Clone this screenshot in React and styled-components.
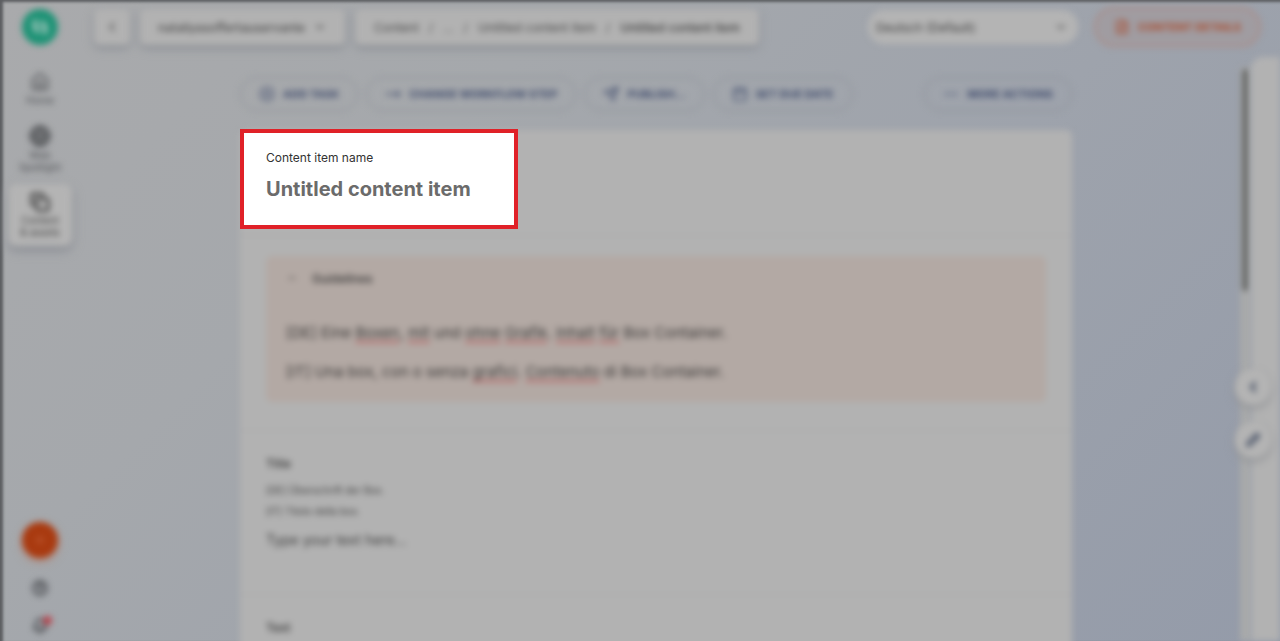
import React from "react";
import styled, { createGlobalStyle, css } from "styled-components";
import {
  Calendar,
  ChevronDown,
  ChevronLeft,
  ChevronUp,
  CircleHelp,
  CirclePlus,
  Globe,
  FileText,
  House,
  Bell,
  Copy,
  MoveRight,
  Ellipsis,
  Pencil,
  Plus,
  Send,
} from "lucide-react";

const GlobalStyle = createGlobalStyle`
  * {
    box-sizing: border-box;
  }

  body {
    margin: 0;
    font-family: Inter, "Liberation Sans", sans-serif;
    font-size: 12px;
    color: #4c4c4c;
  }

  button, input, select {
    font: inherit;
    color: inherit;
  }
`;

const outOfFocus = css`
  filter: blur(3px);
`;

const Page = styled.div`
  display: flex;
  height: 100vh;
  overflow: hidden;
  background: linear-gradient(135deg, #a9aaac 0%, #a5a8ac 30%, #9ea3ac 60%, #949ba9 100%);
  box-shadow: inset 3px 2px 3px #5c5e61;
`;

const Sidebar = styled.nav`
  ${outOfFocus}
  display: flex;
  flex-direction: column;
  align-items: center;
  width: 80px;
  padding-top: 8px;
`;

const Logo = styled.a`
  display: flex;
  width: 38px;
  height: 38px;
  margin-bottom: 18px;
`;

const NavItem = styled.a`
  display: flex;
  flex-direction: column;
  align-items: center;
  gap: 2px;
  width: 64px;
  margin-bottom: 3px;
  padding: 8px 4px;
  border-radius: 8px;
  font-size: 10px;
  line-height: 12px;
  text-align: center;
  text-decoration: none;
  color: ${(props) => (props.$active ? "#3c3c3c" : "#4c4e51")};
  background-color: ${(props) => (props.$active ? "#b4b4b4" : "transparent")};
  box-shadow: ${(props) => (props.$active ? "0 4px 8px #85888f" : "none")};
`;

const NavBottom = styled.div`
  display: flex;
  flex-direction: column;
  align-items: center;
  gap: 22px;
  margin-top: auto;
  padding-bottom: 7px;
`;

const RoundButton = styled.button`
  display: flex;
  align-items: center;
  justify-content: center;
  width: 36px;
  height: 36px;
  padding: 0;
  border: none;
  border-radius: 50%;
  color: ${(props) => (props.$alert ? "#c96a45" : "#4a5468")};
  background-color: ${(props) => (props.$alert ? "#a93a10" : "#b4b4b4")};
  box-shadow: 0 3px 7px ${(props) => (props.$alert ? "#b08474" : "#8d8f93")};
`;

const IconButton = styled.button`
  position: relative;
  display: flex;
  padding: 0;
  border: none;
  background: none;
  color: #3c3e42;
`;

const Dot = styled.span`
  position: absolute;
  top: -2px;
  right: -4px;
  width: 9px;
  height: 9px;
  border-radius: 50%;
  background-color: #b8404a;
`;

const Main = styled.div`
  display: flex;
  flex: 1;
  flex-direction: column;
  min-width: 0;
`;

const TopBar = styled.header`
  ${outOfFocus}
  display: flex;
  align-items: center;
  gap: 10px;
  padding: 7px 19px 10px 14px;
`;

const BarButton = styled.button`
  display: flex;
  align-items: center;
  justify-content: center;
  gap: 8px;
  height: 36px;
  padding: 0 ${(props) => (props.$square ? 10 : 18)}px;
  border: none;
  border-radius: 6px;
  font-weight: 500;
  background-color: #b2b2b2;
  box-shadow: 0 3px 7px #868a91;
`;

const Breadcrumbs = styled.nav`
  display: flex;
  align-items: center;
  gap: 10px;
  height: 36px;
  padding: 0 19px;
  border-radius: 6px;
  white-space: nowrap;
  background-color: #b2b2b2;
  box-shadow: 0 3px 7px #868a91;
`;

const Crumb = styled.a`
  color: ${(props) => (props.$current ? "#3c3c3c" : "#484848")};
  font-weight: ${(props) => (props.$current ? 500 : 400)};
  text-decoration: none;
`;

const SelectBox = styled.label`
  display: grid;
  align-items: center;
  width: 210px;
  margin-left: auto;
  border-radius: 16px;
  background-color: #b4b4b4;

  > * {
    grid-area: 1 / 1;
  }

  > svg {
    justify-self: end;
    margin-right: 10px;
  }
`;

const Select = styled.select`
  width: 100%;
  height: 34px;
  padding: 0 8px;
  border: none;
  color: #3c3c3c;
  background: none;
  appearance: none;
`;

const Pill = styled.button`
  display: flex;
  align-items: center;
  justify-content: center;
  gap: 8px;
  height: ${(props) => (props.$warm ? 40 : 34)}px;
  padding: 0 18px;
  border: ${(props) => (props.$warm ? "2px solid #aa8c87" : "1px solid #8a8e96")};
  border-radius: 20px;
  font-size: 11px;
  font-weight: 700;
  white-space: nowrap;
  color: ${(props) => (props.$warm ? "#a84a2c" : "#3f4b6c")};
  background-color: ${(props) => (props.$warm ? "#a09ca1" : "transparent")};

  &:last-child {
    margin-left: ${(props) => (props.$warm ? 6 : 0)}px;
  }
`;

const Body = styled.div`
  display: flex;
  flex: 1;
  min-height: 0;
`;

const Workspace = styled.main`
  flex: 1;
  min-width: 0;
  padding: 20px 168px 0 160px;
`;

const Actions = styled.div`
  ${outOfFocus}
  display: flex;
  gap: 8px;
  margin-bottom: 19px;
`;

const Spacer = styled.div`
  flex: 1;
`;

const Editor = styled.div`
  position: relative;
`;

const Card = styled.div`
  ${outOfFocus}
  border-radius: 6px 6px 0 0;
  background-color: #b2b2b2;
`;

const Section = styled.section`
  padding: 20px 26px 28px;
  border-bottom: 1px solid #a9aaab;
`;

const NameSection = styled(Section)`
  height: 106px;
`;

const ElementSection = styled(Section)`
  padding: 23px 26px;
`;

const Spotlight = styled.div`
  position: absolute;
  top: -1px;
  left: 0;
  width: 278px;
  height: 100px;
  padding: 17px 22px;
  border: 4px solid #e02128;
  background-color: #fff;
`;

const NameLabel = styled.label`
  display: block;
  margin-bottom: 7px;
  font-size: 12px;
  line-height: 16px;
  color: #333;
`;

const NameInput = styled.input`
  display: block;
  width: 100%;
  height: 32px;
  padding: 0;
  border: none;
  outline: none;
  font-size: 20px;
  font-weight: 700;
  color: #6b6b6b;
  background: none;
`;

const Guidelines = styled.div`
  padding: 13px 20px 18px;
  border-radius: 6px;
  background-color: #b3a9a4;
`;

const GuidelinesToggle = styled.button`
  display: flex;
  align-items: center;
  gap: 14px;
  height: 18px;
  margin-bottom: 34px;
  padding: 0;
  border: none;
  font-weight: 500;
  color: #333;
  background: none;
`;

const Guideline = styled.p`
  margin: 0 0 15px;
  font-size: 15px;
  line-height: 24px;
  color: #3c3a39;

  &:last-child {
    margin-bottom: 0;
  }
`;

const Misspelled = styled.span`
  text-decoration: underline 2px #b86060;
  text-underline-offset: 3px;
`;

const ElementName = styled.label`
  display: block;
  margin: 0 0 6px;
  font-size: 12px;
  font-weight: 500;
  line-height: 20px;
  color: #333;
`;

const Hint = styled.p`
  margin: 0;
  font-size: 10px;
  line-height: 21px;
  color: #404040;
`;

const TextInput = styled.input`
  width: 100%;
  height: 32px;
  margin: 1px 0 16px;
  padding: 0;
  border: none;
  font-size: 14px;
  background: none;

  &::placeholder {
    color: #3c3c3c;
    opacity: 1;
  }
`;

const ScrollTrack = styled.div`
  ${outOfFocus}
  width: 11px;
  margin-top: 10px;
  padding: 2px;
  background-color: #a9aaaa;
`;

const ScrollThumb = styled.div`
  height: 222px;
  border-radius: 4px;
  background-color: #6a6b6a;
`;

const SidePanel = styled.aside`
  ${outOfFocus}
  position: relative;
  width: 29px;
  border-radius: 12px 0 0 0;
  background-color: #b2b2b2;
`;

const PanelTools = styled.div`
  position: absolute;
  top: 312px;
  left: -16px;
  display: flex;
  flex-direction: column;
  gap: 17px;
`;

function App() {
  return (
    <>
      <GlobalStyle />
      <Page>
        <Sidebar>
          <Logo href="#" aria-label="Kontent">
            <svg width="38" height="38" viewBox="0 0 38 38">
              <circle cx="19" cy="19" r="18" fill="#1f9376" />
              <path
                d="M14 12v8l4 4M20 14l4 4v8"
                fill="none"
                stroke="#a4c8be"
                strokeWidth="4"
                strokeLinejoin="round"
              />
            </svg>
          </Logo>
          <NavItem href="#">
            <House size={20} />
            Home
          </NavItem>
          <NavItem href="#">
            <Globe size={22} strokeWidth={3} />
            <span>
              Web
              <br />
              Spotlight
            </span>
          </NavItem>
          <NavItem href="#" $active>
            <Copy size={20} strokeWidth={3} />
            <span>
              Content
              <br />
              &amp; assets
            </span>
          </NavItem>
          <NavBottom>
            <RoundButton $alert aria-label="Create">
              <Plus size={14} />
            </RoundButton>
            <IconButton aria-label="Help">
              <CircleHelp size={16} strokeWidth={3} />
            </IconButton>
            <IconButton aria-label="Notifications">
              <Bell size={16} strokeWidth={3} />
              <Dot />
            </IconButton>
          </NavBottom>
        </Sidebar>
        <Main>
          <TopBar>
            <BarButton $square aria-label="Back">
              <ChevronLeft size={16} />
            </BarButton>
            <BarButton>
              nataliyasoffertauservante
              <ChevronDown size={14} />
            </BarButton>
            <Breadcrumbs>
              <Crumb href="#">Content</Crumb>
              <span>/</span>
              <Crumb href="#">...</Crumb>
              <span>/</span>
              <Crumb href="#">Untitled content item</Crumb>
              <span>/</span>
              <Crumb href="#" $current>
                Untitled content item
              </Crumb>
            </Breadcrumbs>
            <SelectBox>
              <Select aria-label="Language">
                <option>Deutsch (Default)</option>
              </Select>
              <ChevronDown size={14} />
            </SelectBox>
            <Pill $warm>
              <FileText size={16} />
              CONTENT DETAILS
            </Pill>
          </TopBar>
          <Body>
            <Workspace>
              <Actions>
                <Pill>
                  <CirclePlus size={16} />
                  ADD TASK
                </Pill>
                <Pill>
                  <MoveRight size={16} />
                  CHANGE WORKFLOW STEP
                </Pill>
                <Pill>
                  <Send size={16} />
                  PUBLISH...
                </Pill>
                <Pill>
                  <Calendar size={16} />
                  SET DUE DATE
                </Pill>
                <Spacer />
                <Pill>
                  <Ellipsis size={16} />
                  MORE ACTIONS
                </Pill>
              </Actions>
              <Editor>
                <Card>
                  <NameSection />
                  <Section>
                    <Guidelines>
                      <GuidelinesToggle>
                        <ChevronUp size={12} />
                        Guidelines
                      </GuidelinesToggle>
                      <Guideline>
                        [DE] Eine <Misspelled>Boxen</Misspelled>, <Misspelled>mit</Misspelled> und{" "}
                        <Misspelled>ohne</Misspelled> <Misspelled>Grafik</Misspelled>.{" "}
                        <Misspelled>Inhalt</Misspelled> <Misspelled>für</Misspelled> Box Container.
                      </Guideline>
                      <Guideline>
                        [IT] Una box, con o senza <Misspelled>grafici</Misspelled>.{" "}
                        <Misspelled>Contenuto</Misspelled> di Box Container.
                      </Guideline>
                    </Guidelines>
                  </Section>
                  <ElementSection>
                    <ElementName htmlFor="title">Title</ElementName>
                    <Hint>[DE] Überschrift der Box.</Hint>
                    <Hint>[IT] Titolo della box.</Hint>
                    <TextInput id="title" placeholder="Type your text here..." />
                  </ElementSection>
                  <ElementSection>
                    <ElementName as="h3">Text</ElementName>
                  </ElementSection>
                </Card>
                <Spotlight>
                  <NameLabel htmlFor="item-name">Content item name</NameLabel>
                  <NameInput id="item-name" defaultValue="Untitled content item" />
                </Spotlight>
              </Editor>
            </Workspace>
            <ScrollTrack>
              <ScrollThumb />
            </ScrollTrack>
            <SidePanel>
              <PanelTools>
                <RoundButton aria-label="Expand panel">
                  <ChevronLeft size={16} strokeWidth={4} />
                </RoundButton>
                <RoundButton aria-label="Edit">
                  <Pencil size={14} strokeWidth={4} />
                </RoundButton>
              </PanelTools>
            </SidePanel>
          </Body>
        </Main>
      </Page>
    </>
  );
}

export default App;
